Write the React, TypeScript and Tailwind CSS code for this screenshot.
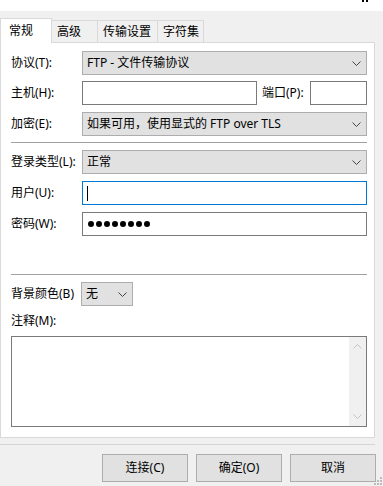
import React from 'react';

const FONT = '"Noto Sans", "Noto Sans CJK SC", sans-serif';

const Chevron: React.FC<{ up?: boolean; color?: string }> = ({ up, color = '#444' }) => (
  <svg width="9" height="5" viewBox="0 0 9 5" className="shrink-0">
    <path d={up ? 'M0.5 4.5 L4.5 0.5 L8.5 4.5' : 'M0.5 0.5 L4.5 4.5 L8.5 0.5'} fill="none" stroke={color} strokeWidth="1" />
  </svg>
);

const Select: React.FC<{ value: string; className?: string }> = ({ value, className = 'w-[285px]' }) => (
  <div className={`${className} h-[24px] flex items-center justify-between bg-[#e1e1e1] border border-[#adadad] pl-[4px] pr-[5px]`}>
    <span className="whitespace-nowrap">{value}</span>
    <Chevron />
  </div>
);

const Label: React.FC<{ text: string; w?: string }> = ({ text, w = 'w-[71px]' }) => (
  <div className={`${w} shrink-0 whitespace-nowrap`}>{text}</div>
);

const Tab: React.FC<{ label: string; active?: boolean; w: string }> = ({ label, active, w }) =>
  active ? (
    <div className={`${w} h-[25px] relative z-10 -mb-px bg-white border-t border-l border-r border-[#d9d9d9] pl-[8px] pt-[4px]`}>
      {label}
    </div>
  ) : (
    <div className={`${w} h-[22px] bg-[#f0f0f0] border-t border-r border-[#d9d9d9] pl-[5px] pt-[3px]`}>
      {label}
    </div>
  );

export default function App() {
  return (
    <div
      className="relative w-[383px] h-[486px] bg-[#f0f0f0] overflow-hidden text-[12px] leading-[16px] text-black"
      style={{ fontFamily: FONT }}
    >
      <div className="h-[11px] bg-white" />
      <svg className="absolute right-[10px] top-0" width="12" height="3" viewBox="0 0 12 3">
        <rect x="1" y="0" width="2" height="2" fill="#000" />
        <rect x="5" y="0" width="2" height="2" fill="#000" />
      </svg>

      {/* tabs */}
      <div className="flex items-end h-[31px]">
        <Tab label="常规" active w="w-[52px]" />
        <Tab label="高级" w="w-[46px]" />
        <Tab label="传输设置" w="w-[60px]" />
        <Tab label="字符集" w="w-[46px]" />
      </div>

      {/* panel */}
      <div className="w-[375px] h-[396px] bg-white border border-[#d9d9d9] pl-[10px]">
        <div className="mt-[8px] flex items-center">
          <Label text="协议(T):" />
          <Select value="FTP - 文件传输协议" />
        </div>

        <div className="mt-[6px] flex items-center">
          <Label text="主机(H):" />
          <div className="w-[175px] h-[24px] bg-white border border-[#7a7a7a]" />
          <div className="ml-[5px] w-[48px] whitespace-nowrap">端口(P):</div>
          <div className="w-[57px] h-[24px] bg-white border border-[#7a7a7a]" />
        </div>

        <div className="mt-[7px] flex items-center">
          <Label text="加密(E):" />
          <Select value="如果可用，使用显式的 FTP over TLS" />
        </div>

        <div className="mt-[6px] w-[356px] h-px bg-[#a0a0a0]" />

        <div className="mt-[7px] flex items-center">
          <Label text="登录类型(L):" />
          <Select value="正常" />
        </div>

        <div className="mt-[7px] flex items-center">
          <Label text="用户(U):" />
          <div className="w-[285px] h-[24px] bg-white border border-[#0078d7] flex items-center pl-[4px]">
            <div className="w-px h-[15px] bg-black" />
          </div>
        </div>

        <div className="mt-[7px] flex items-center">
          <Label text="密码(W):" />
          <div className="w-[285px] h-[24px] bg-white border border-[#7a7a7a] flex items-center gap-[2px] pl-[5px]">
            {Array.from({ length: 8 }).map((_, i) => (
              <div key={i} className="w-[6px] h-[6px] rounded-full bg-black" />
            ))}
          </div>
        </div>

        <div className="mt-[38px] w-[356px] h-px bg-[#a0a0a0]" />

        <div className="mt-[7px] flex items-center">
          <Label text="背景颜色(B)" w="w-[70px]" />
          <Select value="无" className="w-[52px]" />
        </div>

        <div className="mt-[7px] h-[16px]">注释(M):</div>

        <div className="mt-[7px] w-[356px] h-[91px] bg-white border border-[#7a7a7a] flex justify-end">
          <div className="w-[17px] h-full bg-[#f0f0f0] flex flex-col items-center justify-between py-[7px]">
            <Chevron up color="#c2c2c2" />
            <Chevron color="#c2c2c2" />
          </div>
        </div>
      </div>

      <div className="mt-[6px] w-[375px] h-px bg-[#d5d5d5]" />

      <div className="mt-[9px] flex justify-end gap-[8px] pr-[7px]">
        {['连接(C)', '确定(O)', '取消'].map((b) => (
          <div
            key={b}
            className="w-[86px] h-[28px] bg-[#e1e1e1] border border-[#adadad] flex items-center justify-center"
          >
            {b}
          </div>
        ))}
      </div>

      {/* resize grip */}
      <svg className="absolute right-[1px] bottom-[1px]" width="9" height="9" viewBox="0 0 9 9">
        {[
          [7, 1],
          [4, 4],
          [7, 4],
          [1, 7],
          [4, 7],
          [7, 7],
        ].map(([x, y], i) => (
          <rect key={i} x={x} y={y} width="2" height="2" fill="#bcbcbc" />
        ))}
      </svg>
    </div>
  );
}
